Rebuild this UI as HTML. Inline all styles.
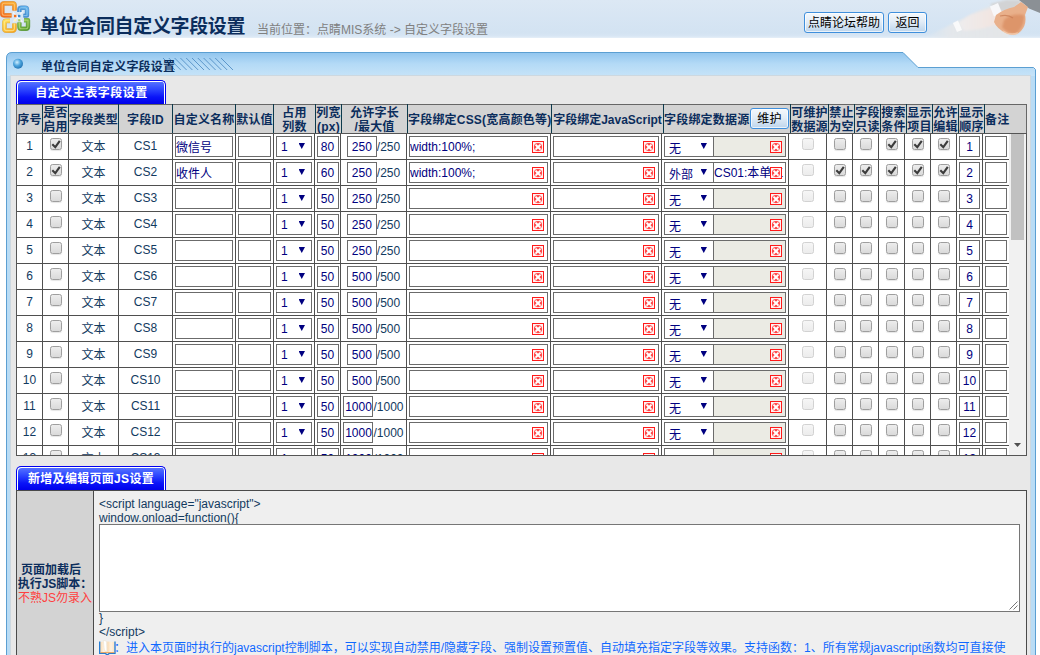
<!DOCTYPE html>
<html lang="zh-CN">
<head>
<meta charset="utf-8">
<title>单位合同自定义字段设置</title>
<style>
html,body{margin:0;padding:0;}
body{width:1040px;height:655px;overflow:hidden;background:#fff;position:relative;
 font-family:"Liberation Sans","Noto Sans CJK SC",sans-serif;font-size:12px;color:#003366;}
#top{position:absolute;left:0;top:0;width:1040px;height:38px;overflow:hidden;background:linear-gradient(#dce8f4 0,#d7e5f3 18px,#d3e3f2 33px,#d8e6f4 36px,#e6eff8 38px);}
#logo{position:absolute;left:0;top:0;}
#title{position:absolute;left:40px;top:14px;font-size:19px;line-height:26px;font-weight:bold;color:#0b2d5c;white-space:nowrap;letter-spacing:-0.35px;}
#crumb{position:absolute;left:257px;top:22px;font-size:12px;line-height:17px;color:#808080;white-space:nowrap;}
.btn{position:absolute;top:12px;height:19px;border:1px solid #3f8fdc;border-radius:3px;background:linear-gradient(#f4f8fc 0,#e3edf7 45%,#bdd5ec 100%);
 color:#000;font-size:12px;line-height:20px;text-align:center;white-space:nowrap;box-shadow:inset 0 0 0 1px rgba(255,255,255,.7);}
#hands{position:absolute;left:920px;top:0;}
#panelbg{position:absolute;left:0;top:45px;}
#ptitle{position:absolute;left:41px;top:58px;font-size:12px;line-height:18px;font-weight:bold;color:#0b2d5c;white-space:nowrap;letter-spacing:0.2px;}
.tab{position:absolute;left:16px;width:146px;height:22px;border:1px solid #0000f0;border-bottom:none;border-radius:5px 5px 0 0;
 background:linear-gradient(#5a78ff 0,#2f49ff 35%,#0a14f8 70%,#0000ea 100%);color:#fff;font-weight:bold;font-size:12px;line-height:22px;text-align:center;
 box-shadow:inset 1px 1px 0 #fff, inset -1px 0 0 #fff;letter-spacing:0.3px;padding:1px 1px 0 1px;}
table{border-collapse:collapse;table-layout:fixed;}
#hd{position:absolute;left:16px;top:104px;width:1010px;}
#hd th{background:#d3d3d3;border:1px solid #0d3a4c;border-top-color:#666;border-bottom-color:#666;height:28px;padding:0;font-size:12px;line-height:14px;font-weight:bold;color:#0b2d5c;text-align:center;white-space:nowrap;overflow:hidden;}
#hd th>div{position:relative;top:1px;letter-spacing:.2px;}
#hd th:first-child{border-left-color:#666;}
#hd th:last-child{border-right-color:#666;}
#sc{position:absolute;left:16px;top:133px;width:1011px;height:323px;box-sizing:border-box;border:1px solid #555;overflow:hidden;}
#bd{position:absolute;left:-1px;top:-1px;width:996px;background:#fff;}
#bd td{border:1px solid #4f4f4f;height:25px;padding:0;text-align:center;font-size:12px;line-height:14px;color:#123a60;white-space:nowrap;overflow:hidden;vertical-align:middle;}
#bd td.t{height:24px;padding-bottom:1px;}
#bd td.zh{height:24px;padding-top:1px;}
.in{display:inline-block;box-sizing:content-box;height:19px;border:1px solid #6b6b6b;background:#fff;color:#000080;font-size:12px;line-height:21px;text-align:left;vertical-align:middle;overflow:hidden;white-space:nowrap;position:relative;}
.in.c{text-align:center;}
.in.z{line-height:23px;}
.in.ro{background:#ebebe4;}
.in.nl{border-left:none;}
.mx{vertical-align:middle;}
.sel{display:inline-block;box-sizing:content-box;height:19px;border:1px solid #6b6b6b;background:#fff;color:#000080;font-size:12px;line-height:21px;text-align:left;vertical-align:middle;position:relative;padding-left:4px;overflow:hidden;}
.sel.z{line-height:24px;}
.sel i{position:absolute;right:6px;top:6px;width:6.5px;height:6px;background:#000080;clip-path:polygon(0 0,100% 0,50% 100%);}
.x{position:absolute;right:3px;top:4px;width:12px;height:12px;line-height:0;}
.cb{display:inline-block;box-sizing:border-box;width:12px;height:12px;border:1px solid #9e9e9e;border-radius:2.5px;background:linear-gradient(#ededed,#dadada);vertical-align:middle;position:relative;top:-3px;box-shadow:0 1px 1px rgba(0,0,0,.10);}
.cb svg{position:absolute;left:-1px;top:-1px;}
.cb.dis{border-color:#d2d2d2;background:linear-gradient(#f6f6f6,#ececec);box-shadow:none;}
#sb{position:absolute;left:992px;top:0;width:17px;height:321px;background:#f1f1f1;}
#sb b{position:absolute;left:2px;top:0;width:13px;height:106px;background:#c1c1c1;}
#sb i{position:absolute;left:5px;top:309px;width:7px;height:4px;background:#505050;clip-path:polygon(0 0,100% 0,50% 100%);}
#js{position:absolute;left:16px;top:490px;width:1010px;}
#js td{border:1px solid #4a4a4a;padding:0;vertical-align:middle;}
#js td.k{background:#d3d3d3;text-align:center;font-weight:bold;color:#0b2d5c;font-size:12px;line-height:14px;white-space:nowrap;}
#js td.k span{font-weight:normal;color:#ff4040;font-size:12px;}
#js td.v{background:#efefef;color:#123a60;font-size:12px;line-height:14px;vertical-align:top;padding:6px 0 0 5px;}
#ta{display:block;width:919px;height:86px;border:1px solid #767676;background:#fff;margin:-1px 0 -1px 0;position:relative;}
.note{color:#1068ff;white-space:nowrap;position:relative;height:14px;line-height:14px;margin-top:2px;}
.bk{vertical-align:top;margin:0 -2px 0 0;position:relative;top:-1px;}
</style>
</head>
<body>
<div id="top">
 <svg id="logo" width="32" height="34" viewBox="0 0 32 34">
  <defs>
   <linearGradient id="lo" gradientUnits="userSpaceOnUse" x1="12" y1="1" x2="3" y2="17"><stop offset="0" stop-color="#fbb030"/><stop offset="1" stop-color="#f4661c"/></linearGradient>
   <linearGradient id="ly" gradientUnits="userSpaceOnUse" x1="4" y1="19" x2="12" y2="33"><stop offset="0" stop-color="#ffe45a"/><stop offset="1" stop-color="#f7a51e"/></linearGradient>
   <linearGradient id="lb" gradientUnits="userSpaceOnUse" x1="26" y1="6" x2="19" y2="17"><stop offset="0" stop-color="#62b4ee"/><stop offset="1" stop-color="#2c78c2"/></linearGradient>
   <linearGradient id="lg" gradientUnits="userSpaceOnUse" x1="20" y1="19" x2="27" y2="31"><stop offset="0" stop-color="#96cb58"/><stop offset="1" stop-color="#4c9628"/></linearGradient>
  </defs>
  <path d="M14.500 10.500 V5.300 Q14.500 3.300 12.500 3.300 H4.200 Q2.200 3.300 2.200 5.300 V13.300 Q2.200 15.300 4.200 15.300 H11.500" fill="none" stroke="#c9792a" stroke-width="4.8" stroke-linejoin="round" stroke-opacity=".75"/><path d="M14.500 10.500 V5.300 Q14.500 3.300 12.500 3.300 H4.200 Q2.200 3.300 2.200 5.300 V13.300 Q2.200 15.300 4.200 15.300 H11.500" fill="none" stroke="url(#lo)" stroke-width="3.8" stroke-linejoin="round"/><path d="M14.500 10.500 V5.300 Q14.500 3.300 12.500 3.300 H4.200 Q2.200 3.300 2.200 5.300 V13.300 Q2.200 15.300 4.200 15.300 H11.500" fill="none" stroke="#ffd28a" stroke-width="1.1" stroke-linejoin="round" stroke-opacity=".65"/><path d="M10 20.800 H6.400 Q4.400 20.800 4.400 22.800 V28.600 Q4.400 30.600 6.400 30.600 H12.400 Q14.400 30.600 14.400 28.600 V23.500" fill="none" stroke="#d39a2c" stroke-width="4.8" stroke-linejoin="round" stroke-opacity=".75"/><path d="M10 20.800 H6.400 Q4.400 20.800 4.400 22.800 V28.600 Q4.400 30.600 6.400 30.600 H12.400 Q14.400 30.600 14.400 28.600 V23.500" fill="none" stroke="url(#ly)" stroke-width="3.8" stroke-linejoin="round"/><path d="M10 20.800 H6.400 Q4.400 20.800 4.400 22.800 V28.600 Q4.400 30.600 6.400 30.600 H12.400 Q14.400 30.600 14.400 28.600 V23.500" fill="none" stroke="#fff0a8" stroke-width="1.1" stroke-linejoin="round" stroke-opacity=".65"/><path d="M19.400 12 V9.800 Q19.400 7.800 21.400 7.800 H25 Q27 7.800 27 9.800 V15.600 H23.500" fill="none" stroke="#2f74b8" stroke-width="4.4" stroke-linejoin="round" stroke-opacity=".75"/><path d="M19.400 12 V9.800 Q19.400 7.800 21.400 7.800 H25 Q27 7.800 27 9.800 V15.600 H23.500" fill="none" stroke="url(#lb)" stroke-width="3.4" stroke-linejoin="round"/><path d="M19.400 12 V9.800 Q19.400 7.800 21.400 7.800 H25 Q27 7.800 27 9.800 V15.600 H23.500" fill="none" stroke="#a9d8f8" stroke-width="1.1" stroke-linejoin="round" stroke-opacity=".65"/><path d="M19.400 22.500 V26.800 Q19.400 28.800 21.400 28.800 H26 Q28 28.800 28 26.800 V20.200 H24" fill="none" stroke="#4d8a26" stroke-width="4.4" stroke-linejoin="round" stroke-opacity=".75"/><path d="M19.400 22.500 V26.800 Q19.400 28.800 21.400 28.800 H26 Q28 28.800 28 26.800 V20.200 H24" fill="none" stroke="url(#lg)" stroke-width="3.4" stroke-linejoin="round"/><path d="M19.400 22.500 V26.800 Q19.400 28.800 21.400 28.800 H26 Q28 28.800 28 26.800 V20.200 H24" fill="none" stroke="#c4e48c" stroke-width="1.1" stroke-linejoin="round" stroke-opacity=".65"/>
  <path d="M13 12.500 L22.500 22 M22.800 11.500 L13.500 21.500" stroke="#fff" stroke-width="1.100" stroke-opacity=".75"/>
  <rect x="14" y="14.800" width="2.400" height="2.400" fill="#f2701e"/><rect x="18" y="14.800" width="2.400" height="2.400" fill="#3a8ad0"/>
  <rect x="14" y="19" width="2.400" height="2.400" fill="#fff3c0"/><rect x="18.200" y="19.200" width="2.200" height="2.200" fill="#a8d468"/>
 </svg>
 <div id="title">单位合同自定义字段设置</div>
 <div id="crumb">当前位置：点睛MIS系统 -&gt; 自定义字段设置</div>
 <div class="btn" style="left:804px;width:78px;">点睛论坛帮助</div>
 <div class="btn" style="left:888px;width:37px;">返回</div>
 <svg id="hands" width="120" height="38" viewBox="0 0 120 38">
  <defs>
   <filter id="bl" x="-20%" y="-20%" width="140%" height="140%"><feGaussianBlur stdDeviation="1.3"/></filter>
   <filter id="bl2" x="-20%" y="-20%" width="140%" height="140%"><feGaussianBlur stdDeviation="0.7"/></filter>
   <filter id="bl3" x="-20%" y="-20%" width="140%" height="140%"><feGaussianBlur stdDeviation="1.1"/></filter>
   <linearGradient id="fade" x1="0" y1="0" x2="1" y2="0"><stop offset="0" stop-color="#e4e8ec" stop-opacity="0"/><stop offset="0.28" stop-color="#e5e8eb" stop-opacity=".92"/><stop offset="1" stop-color="#e4e5e6" stop-opacity="1"/></linearGradient>
   <linearGradient id="fade2" x1="0" y1="0" x2="1" y2="0"><stop offset="0" stop-color="#f1eeee" stop-opacity=".75"/><stop offset="1" stop-color="#f3e2dc" stop-opacity="1"/></linearGradient>
  </defs>
  <path d="M2 39 L32 24 L58 11 L78 3 L100 0 L104 6 L92 22 L88 39 Z" fill="url(#fade)" filter="url(#bl)"/>
  <path d="M70 4 L86 0 L102 0 L96 8 L80 14 Z" fill="#d2d3d4" opacity=".95" filter="url(#bl)"/>
  <path d="M38 23 L50 15 L76 7 L85 14 L79 24 L60 29 L44 31 Z" fill="url(#fade2)" filter="url(#bl)"/>
  <path d="M33 23 L38 20.500 L42 30 L37 32 Z" fill="#fbfbfb" opacity=".95" filter="url(#bl2)"/>
  <path d="M70 6.500 L78 3 L82 13 L74 16.500 Z" fill="#f9f9fb" opacity=".95" filter="url(#bl2)"/>
  <path d="M99 0 L120 0 L120 13 L109 8.500 L104 4 Z" fill="#8b9095" filter="url(#bl2)"/>
  <path d="M76 15 Q84 9 94 7 L101 2 L108 7 L105 15 Q107 24 101 31 Q95 37 86 33 Q77 29 74 22 Z" fill="#e9b08b" filter="url(#bl2)"/>
  <path d="M84 20 Q92 13 104 15 Q105 25 97 33 Q88 35 82 27 Z" fill="#d98c60" opacity=".75" filter="url(#bl3)"/>
  <path d="M80 16 Q88 14 93 18" fill="none" stroke="#c77a52" stroke-width="1.200" opacity=".7" filter="url(#bl2)"/>
  <path d="M83 31 Q90 36 98 33" fill="none" stroke="#f3c7a8" stroke-width="1.500" opacity=".9" filter="url(#bl2)"/>
 </svg>
</div>

<svg id="panelbg" width="1040" height="610" viewBox="0 45 1040 610">
 <defs>
  <linearGradient id="ph" x1="0" y1="52" x2="0" y2="76" gradientUnits="userSpaceOnUse"><stop offset="0" stop-color="#8fc4ee"/><stop offset="0.5" stop-color="#b4daf6"/><stop offset="1" stop-color="#c6e3f8"/></linearGradient>
  <radialGradient id="ball" cx="0.4" cy="0.35" r="0.7"><stop offset="0" stop-color="#cfeeff"/><stop offset="0.5" stop-color="#4ba3dc"/><stop offset="1" stop-color="#1f6fb0"/></radialGradient>
 </defs>
 <path d="M6.500 660 V58 Q6.500 52.500 12 52.500 H903 L918 67.500 H1033.500 L1035.500 69.500 V660 Z" fill="url(#ph)" stroke="#5b9fd2" stroke-width="1"/>
 <rect x="7" y="76" width="1028" height="590" fill="#b9dcf5"/>
 <rect x="10.500" y="75.500" width="1020" height="590" fill="#e8e8e8" stroke="#cdd8e0" stroke-width="1"/>
 <circle cx="18" cy="63.8" r="5" fill="url(#ball)"/>
 <g stroke="#4d8bc2" stroke-width="1" stroke-opacity=".85"><path d="M163.0 58 l12 12 M168.8 58 l12 12 M174.6 58 l12 12 M180.4 58 l12 12 M186.2 58 l12 12 M192.0 58 l12 12 M197.8 58 l12 12 M203.6 58 l12 12 M209.4 58 l12 12 M215.2 58 l12 12 M221.0 58 l12 12"/></g>
</svg>
<div id="ptitle">单位合同自定义字段设置</div>

<div class="tab" style="top:80px;letter-spacing:.5px;text-indent:1px">自定义主表字段设置</div>

<table id="hd">
 <colgroup><col style="width:26px"><col style="width:26px"><col style="width:50px"><col style="width:54px"><col style="width:63px"><col style="width:38px"><col style="width:42px"><col style="width:26px"><col style="width:66px"><col style="width:144px"><col style="width:112px"><col style="width:127px"><col style="width:38px"><col style="width:26px"><col style="width:26px"><col style="width:26px"><col style="width:26px"><col style="width:26px"><col style="width:26px"><col style="width:42px"></colgroup>
 <tr>
  <th><div>序号</div></th><th><div>是否<br>启用</div></th><th><div>字段类型</div></th><th><div>字段ID</div></th><th><div>自定义名称</div></th><th><div>默认值</div></th><th><div>占用<br>列数</div></th><th><div>列宽<br>(px)</div></th><th><div>允许字长<br>/最大值</div></th><th><div>字段绑定CSS(宽高颜色等)</div></th><th><div style="letter-spacing:0">字段绑定JavaScript</div></th>
  <th style="text-align:left;position:relative"><div>字段绑定数据源<span class="btn" style="position:absolute;left:86px;top:-5px;width:37px;font-weight:normal">维护</span></div></th>
  <th><div>可维护<br>数据源</div></th><th><div>禁止<br>为空</div></th><th><div>字段<br>只读</div></th><th><div>搜索<br>条件</div></th><th><div>显示<br>项目</div></th><th><div>允许<br>编辑</div></th><th><div>显示<br>顺序</div></th><th style="text-align:left"><div>备注</div></th>
 </tr>
</table>

<div id="sc">
 <table id="bd">
  <colgroup><col style="width:26px"><col style="width:26px"><col style="width:50px"><col style="width:54px"><col style="width:63px"><col style="width:38px"><col style="width:41px"><col style="width:26px"><col style="width:66px"><col style="width:144px"><col style="width:111px"><col style="width:127px"><col style="width:38px"><col style="width:26px"><col style="width:26px"><col style="width:26px"><col style="width:26px"><col style="width:26px"><col style="width:26px"><col style="width:30px"></colgroup>
<tr><td class="t">1</td><td><span class="cb on"><svg viewBox="0 0 12 12" width="12" height="12"><path d="M2.3 6.2 L5.3 9.2 L9.8 2.8" fill="none" stroke="#3c3c3c" stroke-width="2.1"/></svg></span></td><td class="zh">文本</td><td class="t">CS1</td><td><span class="in z" style="width:56px">微信号</span></td><td><span class="in" style="width:31px"></span></td><td><span class="sel" style="width:30px">1<i></i></span></td><td><span class="in c" style="width:20px">80</span></td><td><span class="in c" style="width:28px">250</span><span class="mx">/250</span></td><td><span class="in tx" style="width:137px">width:100%;<span class="x"><svg viewBox="0 0 12 12" width="12" height="12"><rect x="0.5" y="0.5" width="11" height="11" fill="#fff1f1" stroke="#ff1a1a"/><circle cx="6" cy="6.100" r="4.100" fill="#ff3030" fill-opacity=".88"/><path d="M3.500 3.600 L8.500 8.600 M8.500 3.600 L3.500 8.600" stroke="#fff" stroke-width="1.900"/><rect x="4.600" y="4.700" width="2.800" height="2.800" fill="#fff"/></svg></span></span></td><td><span class="in tx" style="width:104px"><span class="x"><svg viewBox="0 0 12 12" width="12" height="12"><rect x="0.5" y="0.5" width="11" height="11" fill="#fff1f1" stroke="#ff1a1a"/><circle cx="6" cy="6.100" r="4.100" fill="#ff3030" fill-opacity=".88"/><path d="M3.500 3.600 L8.500 8.600 M8.500 3.600 L3.500 8.600" stroke="#fff" stroke-width="1.900"/><rect x="4.600" y="4.700" width="2.800" height="2.800" fill="#fff"/></svg></span></span></td><td><span class="sel z" style="width:44px">无<i></i></span><span class="in tx ro nl" style="width:71px"><span class="x"><svg viewBox="0 0 12 12" width="12" height="12"><rect x="0.5" y="0.5" width="11" height="11" fill="#fff1f1" stroke="#ff1a1a"/><circle cx="6" cy="6.100" r="4.100" fill="#ff3030" fill-opacity=".88"/><path d="M3.500 3.600 L8.500 8.600 M8.500 3.600 L3.500 8.600" stroke="#fff" stroke-width="1.900"/><rect x="4.600" y="4.700" width="2.800" height="2.800" fill="#fff"/></svg></span></span></td><td><span class="cb dis"></span></td><td><span class="cb"></span></td><td><span class="cb"></span></td><td><span class="cb on"><svg viewBox="0 0 12 12" width="12" height="12"><path d="M2.3 6.2 L5.3 9.2 L9.8 2.8" fill="none" stroke="#3c3c3c" stroke-width="2.1"/></svg></span></td><td><span class="cb on"><svg viewBox="0 0 12 12" width="12" height="12"><path d="M2.3 6.2 L5.3 9.2 L9.8 2.8" fill="none" stroke="#3c3c3c" stroke-width="2.1"/></svg></span></td><td><span class="cb on"><svg viewBox="0 0 12 12" width="12" height="12"><path d="M2.3 6.2 L5.3 9.2 L9.8 2.8" fill="none" stroke="#3c3c3c" stroke-width="2.1"/></svg></span></td><td><span class="in c" style="width:19px">1</span></td><td style="text-align:left"><span class="in" style="width:20px;margin-left:2px"></span></td></tr>
<tr><td class="t">2</td><td><span class="cb on"><svg viewBox="0 0 12 12" width="12" height="12"><path d="M2.3 6.2 L5.3 9.2 L9.8 2.8" fill="none" stroke="#3c3c3c" stroke-width="2.1"/></svg></span></td><td class="zh">文本</td><td class="t">CS2</td><td><span class="in z" style="width:56px">收件人</span></td><td><span class="in" style="width:31px"></span></td><td><span class="sel" style="width:30px">1<i></i></span></td><td><span class="in c" style="width:20px">60</span></td><td><span class="in c" style="width:28px">250</span><span class="mx">/250</span></td><td><span class="in tx" style="width:137px">width:100%;<span class="x"><svg viewBox="0 0 12 12" width="12" height="12"><rect x="0.5" y="0.5" width="11" height="11" fill="#fff1f1" stroke="#ff1a1a"/><circle cx="6" cy="6.100" r="4.100" fill="#ff3030" fill-opacity=".88"/><path d="M3.500 3.600 L8.500 8.600 M8.500 3.600 L3.500 8.600" stroke="#fff" stroke-width="1.900"/><rect x="4.600" y="4.700" width="2.800" height="2.800" fill="#fff"/></svg></span></span></td><td><span class="in tx" style="width:104px"><span class="x"><svg viewBox="0 0 12 12" width="12" height="12"><rect x="0.5" y="0.5" width="11" height="11" fill="#fff1f1" stroke="#ff1a1a"/><circle cx="6" cy="6.100" r="4.100" fill="#ff3030" fill-opacity=".88"/><path d="M3.500 3.600 L8.500 8.600 M8.500 3.600 L3.500 8.600" stroke="#fff" stroke-width="1.900"/><rect x="4.600" y="4.700" width="2.800" height="2.800" fill="#fff"/></svg></span></span></td><td><span class="sel z" style="width:44px">外部<i></i></span><span class="in tx nl" style="width:71px">CS01:本单位<span class="x" style="box-shadow:0 -1px 0 #fff,0 1px 0 #fff"><svg viewBox="0 0 12 12" width="12" height="12"><rect x="0.5" y="0.5" width="11" height="11" fill="#fff1f1" stroke="#ff1a1a"/><circle cx="6" cy="6.100" r="4.100" fill="#ff3030" fill-opacity=".88"/><path d="M3.500 3.600 L8.500 8.600 M8.500 3.600 L3.500 8.600" stroke="#fff" stroke-width="1.900"/><rect x="4.600" y="4.700" width="2.800" height="2.800" fill="#fff"/></svg></span></span></td><td><span class="cb dis"></span></td><td><span class="cb on"><svg viewBox="0 0 12 12" width="12" height="12"><path d="M2.3 6.2 L5.3 9.2 L9.8 2.8" fill="none" stroke="#3c3c3c" stroke-width="2.1"/></svg></span></td><td><span class="cb on"><svg viewBox="0 0 12 12" width="12" height="12"><path d="M2.3 6.2 L5.3 9.2 L9.8 2.8" fill="none" stroke="#3c3c3c" stroke-width="2.1"/></svg></span></td><td><span class="cb on"><svg viewBox="0 0 12 12" width="12" height="12"><path d="M2.3 6.2 L5.3 9.2 L9.8 2.8" fill="none" stroke="#3c3c3c" stroke-width="2.1"/></svg></span></td><td><span class="cb on"><svg viewBox="0 0 12 12" width="12" height="12"><path d="M2.3 6.2 L5.3 9.2 L9.8 2.8" fill="none" stroke="#3c3c3c" stroke-width="2.1"/></svg></span></td><td><span class="cb on"><svg viewBox="0 0 12 12" width="12" height="12"><path d="M2.3 6.2 L5.3 9.2 L9.8 2.8" fill="none" stroke="#3c3c3c" stroke-width="2.1"/></svg></span></td><td><span class="in c" style="width:19px">2</span></td><td style="text-align:left"><span class="in" style="width:20px;margin-left:2px"></span></td></tr>
<tr><td class="t">3</td><td><span class="cb"></span></td><td class="zh">文本</td><td class="t">CS3</td><td><span class="in z" style="width:56px"></span></td><td><span class="in" style="width:31px"></span></td><td><span class="sel" style="width:30px">1<i></i></span></td><td><span class="in c" style="width:20px">50</span></td><td><span class="in c" style="width:28px">250</span><span class="mx">/250</span></td><td><span class="in tx" style="width:137px"><span class="x"><svg viewBox="0 0 12 12" width="12" height="12"><rect x="0.5" y="0.5" width="11" height="11" fill="#fff1f1" stroke="#ff1a1a"/><circle cx="6" cy="6.100" r="4.100" fill="#ff3030" fill-opacity=".88"/><path d="M3.500 3.600 L8.500 8.600 M8.500 3.600 L3.500 8.600" stroke="#fff" stroke-width="1.900"/><rect x="4.600" y="4.700" width="2.800" height="2.800" fill="#fff"/></svg></span></span></td><td><span class="in tx" style="width:104px"><span class="x"><svg viewBox="0 0 12 12" width="12" height="12"><rect x="0.5" y="0.5" width="11" height="11" fill="#fff1f1" stroke="#ff1a1a"/><circle cx="6" cy="6.100" r="4.100" fill="#ff3030" fill-opacity=".88"/><path d="M3.500 3.600 L8.500 8.600 M8.500 3.600 L3.500 8.600" stroke="#fff" stroke-width="1.900"/><rect x="4.600" y="4.700" width="2.800" height="2.800" fill="#fff"/></svg></span></span></td><td><span class="sel z" style="width:44px">无<i></i></span><span class="in tx ro nl" style="width:71px"><span class="x"><svg viewBox="0 0 12 12" width="12" height="12"><rect x="0.5" y="0.5" width="11" height="11" fill="#fff1f1" stroke="#ff1a1a"/><circle cx="6" cy="6.100" r="4.100" fill="#ff3030" fill-opacity=".88"/><path d="M3.500 3.600 L8.500 8.600 M8.500 3.600 L3.500 8.600" stroke="#fff" stroke-width="1.900"/><rect x="4.600" y="4.700" width="2.800" height="2.800" fill="#fff"/></svg></span></span></td><td><span class="cb dis"></span></td><td><span class="cb"></span></td><td><span class="cb"></span></td><td><span class="cb"></span></td><td><span class="cb"></span></td><td><span class="cb"></span></td><td><span class="in c" style="width:19px">3</span></td><td style="text-align:left"><span class="in" style="width:20px;margin-left:2px"></span></td></tr>
<tr><td class="t">4</td><td><span class="cb"></span></td><td class="zh">文本</td><td class="t">CS4</td><td><span class="in z" style="width:56px"></span></td><td><span class="in" style="width:31px"></span></td><td><span class="sel" style="width:30px">1<i></i></span></td><td><span class="in c" style="width:20px">50</span></td><td><span class="in c" style="width:28px">250</span><span class="mx">/250</span></td><td><span class="in tx" style="width:137px"><span class="x"><svg viewBox="0 0 12 12" width="12" height="12"><rect x="0.5" y="0.5" width="11" height="11" fill="#fff1f1" stroke="#ff1a1a"/><circle cx="6" cy="6.100" r="4.100" fill="#ff3030" fill-opacity=".88"/><path d="M3.500 3.600 L8.500 8.600 M8.500 3.600 L3.500 8.600" stroke="#fff" stroke-width="1.900"/><rect x="4.600" y="4.700" width="2.800" height="2.800" fill="#fff"/></svg></span></span></td><td><span class="in tx" style="width:104px"><span class="x"><svg viewBox="0 0 12 12" width="12" height="12"><rect x="0.5" y="0.5" width="11" height="11" fill="#fff1f1" stroke="#ff1a1a"/><circle cx="6" cy="6.100" r="4.100" fill="#ff3030" fill-opacity=".88"/><path d="M3.500 3.600 L8.500 8.600 M8.500 3.600 L3.500 8.600" stroke="#fff" stroke-width="1.900"/><rect x="4.600" y="4.700" width="2.800" height="2.800" fill="#fff"/></svg></span></span></td><td><span class="sel z" style="width:44px">无<i></i></span><span class="in tx ro nl" style="width:71px"><span class="x"><svg viewBox="0 0 12 12" width="12" height="12"><rect x="0.5" y="0.5" width="11" height="11" fill="#fff1f1" stroke="#ff1a1a"/><circle cx="6" cy="6.100" r="4.100" fill="#ff3030" fill-opacity=".88"/><path d="M3.500 3.600 L8.500 8.600 M8.500 3.600 L3.500 8.600" stroke="#fff" stroke-width="1.900"/><rect x="4.600" y="4.700" width="2.800" height="2.800" fill="#fff"/></svg></span></span></td><td><span class="cb dis"></span></td><td><span class="cb"></span></td><td><span class="cb"></span></td><td><span class="cb"></span></td><td><span class="cb"></span></td><td><span class="cb"></span></td><td><span class="in c" style="width:19px">4</span></td><td style="text-align:left"><span class="in" style="width:20px;margin-left:2px"></span></td></tr>
<tr><td class="t">5</td><td><span class="cb"></span></td><td class="zh">文本</td><td class="t">CS5</td><td><span class="in z" style="width:56px"></span></td><td><span class="in" style="width:31px"></span></td><td><span class="sel" style="width:30px">1<i></i></span></td><td><span class="in c" style="width:20px">50</span></td><td><span class="in c" style="width:28px">250</span><span class="mx">/250</span></td><td><span class="in tx" style="width:137px"><span class="x"><svg viewBox="0 0 12 12" width="12" height="12"><rect x="0.5" y="0.5" width="11" height="11" fill="#fff1f1" stroke="#ff1a1a"/><circle cx="6" cy="6.100" r="4.100" fill="#ff3030" fill-opacity=".88"/><path d="M3.500 3.600 L8.500 8.600 M8.500 3.600 L3.500 8.600" stroke="#fff" stroke-width="1.900"/><rect x="4.600" y="4.700" width="2.800" height="2.800" fill="#fff"/></svg></span></span></td><td><span class="in tx" style="width:104px"><span class="x"><svg viewBox="0 0 12 12" width="12" height="12"><rect x="0.5" y="0.5" width="11" height="11" fill="#fff1f1" stroke="#ff1a1a"/><circle cx="6" cy="6.100" r="4.100" fill="#ff3030" fill-opacity=".88"/><path d="M3.500 3.600 L8.500 8.600 M8.500 3.600 L3.500 8.600" stroke="#fff" stroke-width="1.900"/><rect x="4.600" y="4.700" width="2.800" height="2.800" fill="#fff"/></svg></span></span></td><td><span class="sel z" style="width:44px">无<i></i></span><span class="in tx ro nl" style="width:71px"><span class="x"><svg viewBox="0 0 12 12" width="12" height="12"><rect x="0.5" y="0.5" width="11" height="11" fill="#fff1f1" stroke="#ff1a1a"/><circle cx="6" cy="6.100" r="4.100" fill="#ff3030" fill-opacity=".88"/><path d="M3.500 3.600 L8.500 8.600 M8.500 3.600 L3.500 8.600" stroke="#fff" stroke-width="1.900"/><rect x="4.600" y="4.700" width="2.800" height="2.800" fill="#fff"/></svg></span></span></td><td><span class="cb dis"></span></td><td><span class="cb"></span></td><td><span class="cb"></span></td><td><span class="cb"></span></td><td><span class="cb"></span></td><td><span class="cb"></span></td><td><span class="in c" style="width:19px">5</span></td><td style="text-align:left"><span class="in" style="width:20px;margin-left:2px"></span></td></tr>
<tr><td class="t">6</td><td><span class="cb"></span></td><td class="zh">文本</td><td class="t">CS6</td><td><span class="in z" style="width:56px"></span></td><td><span class="in" style="width:31px"></span></td><td><span class="sel" style="width:30px">1<i></i></span></td><td><span class="in c" style="width:20px">50</span></td><td><span class="in c" style="width:28px">500</span><span class="mx">/500</span></td><td><span class="in tx" style="width:137px"><span class="x"><svg viewBox="0 0 12 12" width="12" height="12"><rect x="0.5" y="0.5" width="11" height="11" fill="#fff1f1" stroke="#ff1a1a"/><circle cx="6" cy="6.100" r="4.100" fill="#ff3030" fill-opacity=".88"/><path d="M3.500 3.600 L8.500 8.600 M8.500 3.600 L3.500 8.600" stroke="#fff" stroke-width="1.900"/><rect x="4.600" y="4.700" width="2.800" height="2.800" fill="#fff"/></svg></span></span></td><td><span class="in tx" style="width:104px"><span class="x"><svg viewBox="0 0 12 12" width="12" height="12"><rect x="0.5" y="0.5" width="11" height="11" fill="#fff1f1" stroke="#ff1a1a"/><circle cx="6" cy="6.100" r="4.100" fill="#ff3030" fill-opacity=".88"/><path d="M3.500 3.600 L8.500 8.600 M8.500 3.600 L3.500 8.600" stroke="#fff" stroke-width="1.900"/><rect x="4.600" y="4.700" width="2.800" height="2.800" fill="#fff"/></svg></span></span></td><td><span class="sel z" style="width:44px">无<i></i></span><span class="in tx ro nl" style="width:71px"><span class="x"><svg viewBox="0 0 12 12" width="12" height="12"><rect x="0.5" y="0.5" width="11" height="11" fill="#fff1f1" stroke="#ff1a1a"/><circle cx="6" cy="6.100" r="4.100" fill="#ff3030" fill-opacity=".88"/><path d="M3.500 3.600 L8.500 8.600 M8.500 3.600 L3.500 8.600" stroke="#fff" stroke-width="1.900"/><rect x="4.600" y="4.700" width="2.800" height="2.800" fill="#fff"/></svg></span></span></td><td><span class="cb dis"></span></td><td><span class="cb"></span></td><td><span class="cb"></span></td><td><span class="cb"></span></td><td><span class="cb"></span></td><td><span class="cb"></span></td><td><span class="in c" style="width:19px">6</span></td><td style="text-align:left"><span class="in" style="width:20px;margin-left:2px"></span></td></tr>
<tr><td class="t">7</td><td><span class="cb"></span></td><td class="zh">文本</td><td class="t">CS7</td><td><span class="in z" style="width:56px"></span></td><td><span class="in" style="width:31px"></span></td><td><span class="sel" style="width:30px">1<i></i></span></td><td><span class="in c" style="width:20px">50</span></td><td><span class="in c" style="width:28px">500</span><span class="mx">/500</span></td><td><span class="in tx" style="width:137px"><span class="x"><svg viewBox="0 0 12 12" width="12" height="12"><rect x="0.5" y="0.5" width="11" height="11" fill="#fff1f1" stroke="#ff1a1a"/><circle cx="6" cy="6.100" r="4.100" fill="#ff3030" fill-opacity=".88"/><path d="M3.500 3.600 L8.500 8.600 M8.500 3.600 L3.500 8.600" stroke="#fff" stroke-width="1.900"/><rect x="4.600" y="4.700" width="2.800" height="2.800" fill="#fff"/></svg></span></span></td><td><span class="in tx" style="width:104px"><span class="x"><svg viewBox="0 0 12 12" width="12" height="12"><rect x="0.5" y="0.5" width="11" height="11" fill="#fff1f1" stroke="#ff1a1a"/><circle cx="6" cy="6.100" r="4.100" fill="#ff3030" fill-opacity=".88"/><path d="M3.500 3.600 L8.500 8.600 M8.500 3.600 L3.500 8.600" stroke="#fff" stroke-width="1.900"/><rect x="4.600" y="4.700" width="2.800" height="2.800" fill="#fff"/></svg></span></span></td><td><span class="sel z" style="width:44px">无<i></i></span><span class="in tx ro nl" style="width:71px"><span class="x"><svg viewBox="0 0 12 12" width="12" height="12"><rect x="0.5" y="0.5" width="11" height="11" fill="#fff1f1" stroke="#ff1a1a"/><circle cx="6" cy="6.100" r="4.100" fill="#ff3030" fill-opacity=".88"/><path d="M3.500 3.600 L8.500 8.600 M8.500 3.600 L3.500 8.600" stroke="#fff" stroke-width="1.900"/><rect x="4.600" y="4.700" width="2.800" height="2.800" fill="#fff"/></svg></span></span></td><td><span class="cb dis"></span></td><td><span class="cb"></span></td><td><span class="cb"></span></td><td><span class="cb"></span></td><td><span class="cb"></span></td><td><span class="cb"></span></td><td><span class="in c" style="width:19px">7</span></td><td style="text-align:left"><span class="in" style="width:20px;margin-left:2px"></span></td></tr>
<tr><td class="t">8</td><td><span class="cb"></span></td><td class="zh">文本</td><td class="t">CS8</td><td><span class="in z" style="width:56px"></span></td><td><span class="in" style="width:31px"></span></td><td><span class="sel" style="width:30px">1<i></i></span></td><td><span class="in c" style="width:20px">50</span></td><td><span class="in c" style="width:28px">500</span><span class="mx">/500</span></td><td><span class="in tx" style="width:137px"><span class="x"><svg viewBox="0 0 12 12" width="12" height="12"><rect x="0.5" y="0.5" width="11" height="11" fill="#fff1f1" stroke="#ff1a1a"/><circle cx="6" cy="6.100" r="4.100" fill="#ff3030" fill-opacity=".88"/><path d="M3.500 3.600 L8.500 8.600 M8.500 3.600 L3.500 8.600" stroke="#fff" stroke-width="1.900"/><rect x="4.600" y="4.700" width="2.800" height="2.800" fill="#fff"/></svg></span></span></td><td><span class="in tx" style="width:104px"><span class="x"><svg viewBox="0 0 12 12" width="12" height="12"><rect x="0.5" y="0.5" width="11" height="11" fill="#fff1f1" stroke="#ff1a1a"/><circle cx="6" cy="6.100" r="4.100" fill="#ff3030" fill-opacity=".88"/><path d="M3.500 3.600 L8.500 8.600 M8.500 3.600 L3.500 8.600" stroke="#fff" stroke-width="1.900"/><rect x="4.600" y="4.700" width="2.800" height="2.800" fill="#fff"/></svg></span></span></td><td><span class="sel z" style="width:44px">无<i></i></span><span class="in tx ro nl" style="width:71px"><span class="x"><svg viewBox="0 0 12 12" width="12" height="12"><rect x="0.5" y="0.5" width="11" height="11" fill="#fff1f1" stroke="#ff1a1a"/><circle cx="6" cy="6.100" r="4.100" fill="#ff3030" fill-opacity=".88"/><path d="M3.500 3.600 L8.500 8.600 M8.500 3.600 L3.500 8.600" stroke="#fff" stroke-width="1.900"/><rect x="4.600" y="4.700" width="2.800" height="2.800" fill="#fff"/></svg></span></span></td><td><span class="cb dis"></span></td><td><span class="cb"></span></td><td><span class="cb"></span></td><td><span class="cb"></span></td><td><span class="cb"></span></td><td><span class="cb"></span></td><td><span class="in c" style="width:19px">8</span></td><td style="text-align:left"><span class="in" style="width:20px;margin-left:2px"></span></td></tr>
<tr><td class="t">9</td><td><span class="cb"></span></td><td class="zh">文本</td><td class="t">CS9</td><td><span class="in z" style="width:56px"></span></td><td><span class="in" style="width:31px"></span></td><td><span class="sel" style="width:30px">1<i></i></span></td><td><span class="in c" style="width:20px">50</span></td><td><span class="in c" style="width:28px">500</span><span class="mx">/500</span></td><td><span class="in tx" style="width:137px"><span class="x"><svg viewBox="0 0 12 12" width="12" height="12"><rect x="0.5" y="0.5" width="11" height="11" fill="#fff1f1" stroke="#ff1a1a"/><circle cx="6" cy="6.100" r="4.100" fill="#ff3030" fill-opacity=".88"/><path d="M3.500 3.600 L8.500 8.600 M8.500 3.600 L3.500 8.600" stroke="#fff" stroke-width="1.900"/><rect x="4.600" y="4.700" width="2.800" height="2.800" fill="#fff"/></svg></span></span></td><td><span class="in tx" style="width:104px"><span class="x"><svg viewBox="0 0 12 12" width="12" height="12"><rect x="0.5" y="0.5" width="11" height="11" fill="#fff1f1" stroke="#ff1a1a"/><circle cx="6" cy="6.100" r="4.100" fill="#ff3030" fill-opacity=".88"/><path d="M3.500 3.600 L8.500 8.600 M8.500 3.600 L3.500 8.600" stroke="#fff" stroke-width="1.900"/><rect x="4.600" y="4.700" width="2.800" height="2.800" fill="#fff"/></svg></span></span></td><td><span class="sel z" style="width:44px">无<i></i></span><span class="in tx ro nl" style="width:71px"><span class="x"><svg viewBox="0 0 12 12" width="12" height="12"><rect x="0.5" y="0.5" width="11" height="11" fill="#fff1f1" stroke="#ff1a1a"/><circle cx="6" cy="6.100" r="4.100" fill="#ff3030" fill-opacity=".88"/><path d="M3.500 3.600 L8.500 8.600 M8.500 3.600 L3.500 8.600" stroke="#fff" stroke-width="1.900"/><rect x="4.600" y="4.700" width="2.800" height="2.800" fill="#fff"/></svg></span></span></td><td><span class="cb dis"></span></td><td><span class="cb"></span></td><td><span class="cb"></span></td><td><span class="cb"></span></td><td><span class="cb"></span></td><td><span class="cb"></span></td><td><span class="in c" style="width:19px">9</span></td><td style="text-align:left"><span class="in" style="width:20px;margin-left:2px"></span></td></tr>
<tr><td class="t">10</td><td><span class="cb"></span></td><td class="zh">文本</td><td class="t">CS10</td><td><span class="in z" style="width:56px"></span></td><td><span class="in" style="width:31px"></span></td><td><span class="sel" style="width:30px">1<i></i></span></td><td><span class="in c" style="width:20px">50</span></td><td><span class="in c" style="width:28px">500</span><span class="mx">/500</span></td><td><span class="in tx" style="width:137px"><span class="x"><svg viewBox="0 0 12 12" width="12" height="12"><rect x="0.5" y="0.5" width="11" height="11" fill="#fff1f1" stroke="#ff1a1a"/><circle cx="6" cy="6.100" r="4.100" fill="#ff3030" fill-opacity=".88"/><path d="M3.500 3.600 L8.500 8.600 M8.500 3.600 L3.500 8.600" stroke="#fff" stroke-width="1.900"/><rect x="4.600" y="4.700" width="2.800" height="2.800" fill="#fff"/></svg></span></span></td><td><span class="in tx" style="width:104px"><span class="x"><svg viewBox="0 0 12 12" width="12" height="12"><rect x="0.5" y="0.5" width="11" height="11" fill="#fff1f1" stroke="#ff1a1a"/><circle cx="6" cy="6.100" r="4.100" fill="#ff3030" fill-opacity=".88"/><path d="M3.500 3.600 L8.500 8.600 M8.500 3.600 L3.500 8.600" stroke="#fff" stroke-width="1.900"/><rect x="4.600" y="4.700" width="2.800" height="2.800" fill="#fff"/></svg></span></span></td><td><span class="sel z" style="width:44px">无<i></i></span><span class="in tx ro nl" style="width:71px"><span class="x"><svg viewBox="0 0 12 12" width="12" height="12"><rect x="0.5" y="0.5" width="11" height="11" fill="#fff1f1" stroke="#ff1a1a"/><circle cx="6" cy="6.100" r="4.100" fill="#ff3030" fill-opacity=".88"/><path d="M3.500 3.600 L8.500 8.600 M8.500 3.600 L3.500 8.600" stroke="#fff" stroke-width="1.900"/><rect x="4.600" y="4.700" width="2.800" height="2.800" fill="#fff"/></svg></span></span></td><td><span class="cb dis"></span></td><td><span class="cb"></span></td><td><span class="cb"></span></td><td><span class="cb"></span></td><td><span class="cb"></span></td><td><span class="cb"></span></td><td><span class="in c" style="width:19px">10</span></td><td style="text-align:left"><span class="in" style="width:20px;margin-left:2px"></span></td></tr>
<tr><td class="t">11</td><td><span class="cb"></span></td><td class="zh">文本</td><td class="t">CS11</td><td><span class="in z" style="width:56px"></span></td><td><span class="in" style="width:31px"></span></td><td><span class="sel" style="width:30px">1<i></i></span></td><td><span class="in c" style="width:20px">50</span></td><td><span class="in c" style="width:28px">1000</span><span class="mx">/1000</span></td><td><span class="in tx" style="width:137px"><span class="x"><svg viewBox="0 0 12 12" width="12" height="12"><rect x="0.5" y="0.5" width="11" height="11" fill="#fff1f1" stroke="#ff1a1a"/><circle cx="6" cy="6.100" r="4.100" fill="#ff3030" fill-opacity=".88"/><path d="M3.500 3.600 L8.500 8.600 M8.500 3.600 L3.500 8.600" stroke="#fff" stroke-width="1.900"/><rect x="4.600" y="4.700" width="2.800" height="2.800" fill="#fff"/></svg></span></span></td><td><span class="in tx" style="width:104px"><span class="x"><svg viewBox="0 0 12 12" width="12" height="12"><rect x="0.5" y="0.5" width="11" height="11" fill="#fff1f1" stroke="#ff1a1a"/><circle cx="6" cy="6.100" r="4.100" fill="#ff3030" fill-opacity=".88"/><path d="M3.500 3.600 L8.500 8.600 M8.500 3.600 L3.500 8.600" stroke="#fff" stroke-width="1.900"/><rect x="4.600" y="4.700" width="2.800" height="2.800" fill="#fff"/></svg></span></span></td><td><span class="sel z" style="width:44px">无<i></i></span><span class="in tx ro nl" style="width:71px"><span class="x"><svg viewBox="0 0 12 12" width="12" height="12"><rect x="0.5" y="0.5" width="11" height="11" fill="#fff1f1" stroke="#ff1a1a"/><circle cx="6" cy="6.100" r="4.100" fill="#ff3030" fill-opacity=".88"/><path d="M3.500 3.600 L8.500 8.600 M8.500 3.600 L3.500 8.600" stroke="#fff" stroke-width="1.900"/><rect x="4.600" y="4.700" width="2.800" height="2.800" fill="#fff"/></svg></span></span></td><td><span class="cb dis"></span></td><td><span class="cb"></span></td><td><span class="cb"></span></td><td><span class="cb"></span></td><td><span class="cb"></span></td><td><span class="cb"></span></td><td><span class="in c" style="width:19px">11</span></td><td style="text-align:left"><span class="in" style="width:20px;margin-left:2px"></span></td></tr>
<tr><td class="t">12</td><td><span class="cb"></span></td><td class="zh">文本</td><td class="t">CS12</td><td><span class="in z" style="width:56px"></span></td><td><span class="in" style="width:31px"></span></td><td><span class="sel" style="width:30px">1<i></i></span></td><td><span class="in c" style="width:20px">50</span></td><td><span class="in c" style="width:28px">1000</span><span class="mx">/1000</span></td><td><span class="in tx" style="width:137px"><span class="x"><svg viewBox="0 0 12 12" width="12" height="12"><rect x="0.5" y="0.5" width="11" height="11" fill="#fff1f1" stroke="#ff1a1a"/><circle cx="6" cy="6.100" r="4.100" fill="#ff3030" fill-opacity=".88"/><path d="M3.500 3.600 L8.500 8.600 M8.500 3.600 L3.500 8.600" stroke="#fff" stroke-width="1.900"/><rect x="4.600" y="4.700" width="2.800" height="2.800" fill="#fff"/></svg></span></span></td><td><span class="in tx" style="width:104px"><span class="x"><svg viewBox="0 0 12 12" width="12" height="12"><rect x="0.5" y="0.5" width="11" height="11" fill="#fff1f1" stroke="#ff1a1a"/><circle cx="6" cy="6.100" r="4.100" fill="#ff3030" fill-opacity=".88"/><path d="M3.500 3.600 L8.500 8.600 M8.500 3.600 L3.500 8.600" stroke="#fff" stroke-width="1.900"/><rect x="4.600" y="4.700" width="2.800" height="2.800" fill="#fff"/></svg></span></span></td><td><span class="sel z" style="width:44px">无<i></i></span><span class="in tx ro nl" style="width:71px"><span class="x"><svg viewBox="0 0 12 12" width="12" height="12"><rect x="0.5" y="0.5" width="11" height="11" fill="#fff1f1" stroke="#ff1a1a"/><circle cx="6" cy="6.100" r="4.100" fill="#ff3030" fill-opacity=".88"/><path d="M3.500 3.600 L8.500 8.600 M8.500 3.600 L3.500 8.600" stroke="#fff" stroke-width="1.900"/><rect x="4.600" y="4.700" width="2.800" height="2.800" fill="#fff"/></svg></span></span></td><td><span class="cb dis"></span></td><td><span class="cb"></span></td><td><span class="cb"></span></td><td><span class="cb"></span></td><td><span class="cb"></span></td><td><span class="cb"></span></td><td><span class="in c" style="width:19px">12</span></td><td style="text-align:left"><span class="in" style="width:20px;margin-left:2px"></span></td></tr>
<tr><td class="t">13</td><td><span class="cb"></span></td><td class="zh">文本</td><td class="t">CS13</td><td><span class="in z" style="width:56px"></span></td><td><span class="in" style="width:31px"></span></td><td><span class="sel" style="width:30px">1<i></i></span></td><td><span class="in c" style="width:20px">50</span></td><td><span class="in c" style="width:28px">1000</span><span class="mx">/1000</span></td><td><span class="in tx" style="width:137px"><span class="x"><svg viewBox="0 0 12 12" width="12" height="12"><rect x="0.5" y="0.5" width="11" height="11" fill="#fff1f1" stroke="#ff1a1a"/><circle cx="6" cy="6.100" r="4.100" fill="#ff3030" fill-opacity=".88"/><path d="M3.500 3.600 L8.500 8.600 M8.500 3.600 L3.500 8.600" stroke="#fff" stroke-width="1.900"/><rect x="4.600" y="4.700" width="2.800" height="2.800" fill="#fff"/></svg></span></span></td><td><span class="in tx" style="width:104px"><span class="x"><svg viewBox="0 0 12 12" width="12" height="12"><rect x="0.5" y="0.5" width="11" height="11" fill="#fff1f1" stroke="#ff1a1a"/><circle cx="6" cy="6.100" r="4.100" fill="#ff3030" fill-opacity=".88"/><path d="M3.500 3.600 L8.500 8.600 M8.500 3.600 L3.500 8.600" stroke="#fff" stroke-width="1.900"/><rect x="4.600" y="4.700" width="2.800" height="2.800" fill="#fff"/></svg></span></span></td><td><span class="sel z" style="width:44px">无<i></i></span><span class="in tx ro nl" style="width:71px"><span class="x"><svg viewBox="0 0 12 12" width="12" height="12"><rect x="0.5" y="0.5" width="11" height="11" fill="#fff1f1" stroke="#ff1a1a"/><circle cx="6" cy="6.100" r="4.100" fill="#ff3030" fill-opacity=".88"/><path d="M3.500 3.600 L8.500 8.600 M8.500 3.600 L3.500 8.600" stroke="#fff" stroke-width="1.900"/><rect x="4.600" y="4.700" width="2.800" height="2.800" fill="#fff"/></svg></span></span></td><td><span class="cb dis"></span></td><td><span class="cb"></span></td><td><span class="cb"></span></td><td><span class="cb"></span></td><td><span class="cb"></span></td><td><span class="cb"></span></td><td><span class="in c" style="width:19px">13</span></td><td style="text-align:left"><span class="in" style="width:20px;margin-left:2px"></span></td></tr>
 </table>
 <div id="sb"><b></b><i></i></div>
</div>

<div class="tab" style="top:466px;">新增及编辑页面JS设置</div>

<table id="js">
 <colgroup><col style="width:77px"><col style="width:933px"></colgroup>
 <tr>
  <td class="k" style="height:185px"><i style="font-style:normal;margin-right:8px">页面加载后</i><br>执行JS脚本：<br><span>不熟JS勿录入</span></td>
  <td class="v">&lt;script language="javascript"&gt;<br>window.onload=function(){
   <div id="ta"><svg style="position:absolute;right:1px;bottom:1px" width="9" height="9" viewBox="0 0 9 9"><path d="M8.500 0.500 L0.500 8.500 M8.500 4.500 L4.500 8.500" stroke="#777" stroke-width="1"/></svg></div>
   }<br>&lt;/script&gt;<br>
   <div class="note"><svg class="bk" width="17" height="15" viewBox="0 0 17 15"><defs><linearGradient id="pg" x1="0" y1="0" x2="1" y2="0"><stop offset="0" stop-color="#fbd9ae"/><stop offset="0.5" stop-color="#fff3e2"/><stop offset="1" stop-color="#fde2bf"/></linearGradient></defs><path d="M1.200 2 L7.800 1.200 L8.300 12.400 L1.200 13 Z" fill="url(#pg)"/><path d="M8.300 1.500 L15.600 2 L15.600 13 L8.300 12.400 Z" fill="url(#pg)"/><path d="M4.300 0.300 L7.600 1.300 L7.900 11.800 L5.300 10.300 Z" fill="#fff" stroke="#e9dcc8" stroke-width=".5"/><path d="M0.700 1.500 V13.400 H6.400 L8.300 15 L10.200 13.400 H16 V1.500" fill="none" stroke="#1d78d4" stroke-width="1.300"/><path d="M1.500 12.600 H15.400" stroke="#e9a35c" stroke-width="1"/></svg>：进入本页面时执行的javascript控制脚本，可以实现自动禁用/隐藏字段、强制设置预置值、自动填充指定字段等效果。支持函数：1、所有常规javascript函数均可直接使</div>
  </td>
 </tr>
</table>
</body>
</html>
